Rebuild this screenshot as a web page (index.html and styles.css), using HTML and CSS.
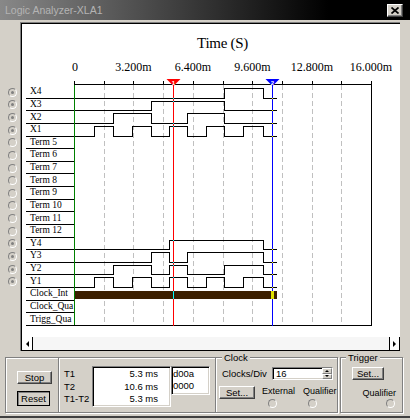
FILE: index.html
```html
<!DOCTYPE html>
<html>
<head>
<meta charset="utf-8">
<link rel="stylesheet" href="styles.css">
</head>
<body>
<div class="window">
  <div class="titlebar">
    <span class="title">Logic Analyzer-XLA1</span>
    <span class="close"><svg width="8" height="7" viewBox="0 0 8 7"><path d="M0.5 0.5L7.5 6.5M7.5 0.5L0.5 6.5" stroke="#000" stroke-width="1.7" fill="none"/></svg></span>
  </div>

  <div class="main">
    <div class="radios">
      <div class="rrow"><span class="radio on"></span></div>
      <div class="rrow"><span class="radio on"></span></div>
      <div class="rrow"><span class="radio on"></span></div>
      <div class="rrow"><span class="radio on"></span></div>
      <div class="rrow"><span class="radio"></span></div>
      <div class="rrow"><span class="radio"></span></div>
      <div class="rrow"><span class="radio"></span></div>
      <div class="rrow"><span class="radio"></span></div>
      <div class="rrow"><span class="radio"></span></div>
      <div class="rrow"><span class="radio"></span></div>
      <div class="rrow"><span class="radio"></span></div>
      <div class="rrow"><span class="radio"></span></div>
      <div class="rrow"><span class="radio on"></span></div>
      <div class="rrow"><span class="radio on"></span></div>
      <div class="rrow"><span class="radio on"></span></div>
      <div class="rrow"><span class="radio on"></span></div>
    </div>

    <div class="scope">
      <div class="scope-in">
        <div class="heading">Time (S)</div>
        <div class="chart">
          <div class="labels">
            <div class="lrow">X4</div>
            <div class="lrow">X3</div>
            <div class="lrow">X2</div>
            <div class="lrow">X1</div>
            <div class="lrow">Term 5</div>
            <div class="lrow">Term 6</div>
            <div class="lrow">Term 7</div>
            <div class="lrow">Term 8</div>
            <div class="lrow">Term 9</div>
            <div class="lrow">Term 10</div>
            <div class="lrow">Term 11</div>
            <div class="lrow">Term 12</div>
            <div class="lrow">Y4</div>
            <div class="lrow">Y3</div>
            <div class="lrow">Y2</div>
            <div class="lrow">Y1</div>
            <div class="lrow">Clock_Int</div>
            <div class="lrow">Clock_Qua</div>
            <div class="lrow">Trigg_Qua</div>
          </div>
          <svg class="plot" width="326" height="279" viewBox="74 58 326 279">
            <g class="axis-labels">
              <text x="75" y="71">0</text>
              <text x="133.5" y="71">3.200m</text>
              <text x="193" y="71">6.400m</text>
              <text x="252.5" y="71">9.600m</text>
              <text x="312" y="71">12.800m</text>
              <text x="371" y="71">16.000m</text>
            </g>
            <g shape-rendering="crispEdges" fill="none">
              <path stroke="#c0c0c0" stroke-dasharray="5 3" d="M104.5 85V325M133.5 85V325M163.5 85V325M193.5 85V325M223.5 85V325M252.5 85V325M282.5 85V325M312.5 85V325M341.5 85V325"/>
              <path stroke="#000" d="M74.5 81V84M104.5 81V84M133.5 81V84M163.5 81V84M193.5 81V84M223.5 81V84M252.5 81V84M282.5 81V84M312.5 81V84M341.5 81V84"/>
              <path stroke="#000" d="M74 84.5H372M371.5 81V326M74 325.5H372"/>
              <g stroke="#000">
                <path d="M74 98.5H224.5V88.5H263.5V98.5H277"/>
                <path d="M74 110.5H151.5V101.5H224.5V110.5H277"/>
                <path d="M74 123.5H113.5V113.5H151.5V123.5H187.5V113.5H224.5V123.5H277"/>
                <path d="M74 136.5H94.5V126.5H113.5V136.5H132.5V126.5H151.5V136.5H169.5V126.5H187.5V136.5H206.5V126.5H224.5V136.5H243.5V126.5H263.5V136.5H277"/>
                <path d="M74 249.5H169.5V240.5H263.5V249.5H277"/>
                <path d="M74 262.5H151.5V252.5H169.5V262.5H187.5V252.5H263.5V262.5H277"/>
                <path d="M74 274.5H113.5V265.5H151.5V274.5H169.5V265.5H187.5V274.5H224.5V265.5H263.5V274.5H277"/>
                <path d="M74 287.5H94.5V277.5H113.5V287.5H132.5V277.5H151.5V287.5H169.5V277.5H187.5V287.5H206.5V277.5H224.5V287.5H243.5V277.5H263.5V287.5H277"/>
              </g>
              <rect x="75" y="291" width="202" height="8" fill="#3c1f00"/>
              <path stroke="#008000" d="M74.5 85V325"/>
              <path stroke="#ff0000" d="M173.5 84V326"/>
              <path stroke="#0000ff" d="M272.5 84V326"/>
              <rect x="173" y="291" width="1" height="8" fill="#00ffff"/>
              <rect x="271" y="291" width="3" height="8" fill="#e0e000"/>
              <path fill="#00ffff" d="M173 98h1v1h-1zM173 101h1v1h-1zM173 123h1v1h-1zM173 126h1v1h-1zM173 240h1v1h-1zM173 262h1v1h-1zM173 265h1v1h-1zM173 277h1v1h-1z"/>
              <path fill="#ffff00" d="M272 98h1v1h-1zM272 110h1v1h-1zM272 123h1v1h-1zM272 136h1v1h-1zM272 249h1v1h-1zM272 262h1v1h-1zM272 274h1v1h-1zM272 287h1v1h-1z"/>
            </g>
            <polygon points="166.5,79 180.5,79 173.5,86" fill="#ff0000"/>
            <text class="mk" x="173.5" y="84.5">1</text>
            <polygon points="265.5,79 279.5,79 272.5,86" fill="#0000ff"/>
            <text class="mk" x="272.5" y="84.5">2</text>
          </svg>
        </div>
        <div class="hscroll">
          <div class="sb-btn sb-left"><span class="arrow-l"></span></div>
          <div class="sb-track"></div>
          <div class="sb-btn sb-right"><span class="arrow-r"></span></div>
        </div>
      </div>
    </div>
  </div>

  <div class="controls">
    <div class="etch run">
      <div class="btn stop">Stop</div>
      <div class="btn reset">Reset</div>
    </div>
    <div class="etch tvals">
      <div class="tlabels">
        <div>T1</div>
        <div>T2</div>
        <div>T1-T2</div>
      </div>
      <div class="sunken tbox">
        <div>5.3 ms</div>
        <div>10.6 ms</div>
        <div>5.3 ms</div>
      </div>
      <div class="sunken hbox">
        <div>d00a</div>
        <div>0000</div>
      </div>
    </div>
    <div class="etch clock">
      <div class="legend">Clock</div>
      <div class="cdrow">
        <span class="cdlabel">Clocks/Div</span>
        <div class="sunken spin-input">
          <span>16</span>
          <span class="spin"><i class="up"></i><i class="down"></i></span>
        </div>
      </div>
      <div class="cdrow2">
        <div class="btn cset">Set...</div>
        <div class="opt ext">
          <div>External</div>
          <span class="radio"></span>
        </div>
        <div class="opt qual">
          <div>Qualifier</div>
          <span class="radio"></span>
        </div>
      </div>
    </div>
    <div class="etch trigger">
      <div class="legend">Trigger</div>
      <div class="btn tset">Set...</div>
      <div class="tqual">Qualifier</div>
      <span class="radio tradio"></span>
    </div>
  </div>
</div>
</body>
</html>
```

FILE: styles.css
```css
html, body {
  margin: 0;
  background: #d4d0c8;
}
body {
  width: 410px;
  height: 420px;
  overflow: hidden;
  font-family: "Liberation Sans", Arial, sans-serif;
  font-size: 9.5px;
  color: #000;
}
.window {
  height: 416px;
  border-bottom: 2px solid #404040;
}

/* title bar */
.titlebar {
  height: 20px;
  display: flex;
  align-items: center;
  justify-content: space-between;
  padding: 0 7px 0 5px;
  background: linear-gradient(to right, #888888 0%, #000000 80%);
}
.title {
  color: #b4b4b4;
  font-size: 10.5px;
}
.close {
  width: 16px;
  height: 13px;
  box-sizing: border-box;
  background: #d4d0c8;
  border: 1px solid;
  border-color: #fff #404040 #404040 #fff;
  box-shadow: inset -1px -1px 0 #808080;
  display: flex;
  align-items: center;
  justify-content: center;
}
.close svg { display: block; }

/* main area */
.main {
  display: grid;
  grid-template-columns: 20px 380px;
  padding-top: 2px;
  height: 331px;
  box-sizing: border-box;
}
.radios {
  padding: 64px 0 0 8px;
}
.rrow {
  height: 12.6316px;
  display: flex;
  align-items: center;
}
.radio {
  width: 9px;
  height: 9px;
  box-sizing: border-box;
  border-radius: 50%;
  border: 1px solid;
  border-color: #808080 #fff #fff #808080;
  display: flex;
  align-items: center;
  justify-content: center;
}
.radio.on::after {
  content: "";
  width: 3px;
  height: 3px;
  border-radius: 50%;
  background: #808080;
}

.scope {
  border-top: 1px solid #808080;
  border-left: 1px solid #808080;
}
.scope-in {
  border-top: 1px solid #000;
  border-left: 1px solid #000;
  background: #fff;
}
.heading {
  margin-left: 52px;
  width: 297px;
  padding: 9px 0 5px;
  line-height: 20px;
  text-align: center;
  font-family: "Liberation Serif", "Times New Roman", serif;
  font-size: 15px;
  letter-spacing: -0.3px;
}
.chart {
  display: grid;
  grid-template-columns: 52px 326px;
  height: 279px;
}
.labels {
  padding: 28px 0 0 4px;
  font-family: "Liberation Serif", "Times New Roman", serif;
  font-size: 9.5px;
}
.lrow {
  height: 12.6316px;
  box-sizing: border-box;
  border-bottom: 1px solid #000;
  padding-left: 4px;
  line-height: 11px;
  white-space: nowrap;
  overflow: hidden;
  display: flex;
  align-items: center;
}
.plot {
  display: block;
  overflow: visible;
}
.axis-labels {
  font-family: "Liberation Serif", "Times New Roman", serif;
  font-size: 12px;
  text-anchor: middle;
  fill: #000;
}
.mk {
  font-family: "Liberation Sans", Arial, sans-serif;
  font-size: 6px;
  font-weight: bold;
  text-anchor: middle;
  fill: #fff;
}

/* horizontal scrollbar */
.hscroll {
  display: flex;
  height: 13px;
  border-bottom: 1px solid #000;
  background: #f6f6f6;
}
.sb-btn {
  width: 11px;
  box-sizing: border-box;
  background: #fff;
  display: flex;
  align-items: center;
  justify-content: center;
}
.sb-left { border-right: 1px solid #000; }
.sb-right {
  border-left: 1px solid #000;
  border-right: 1px solid #000;
}
.sb-track { flex: 1; }
.arrow-l {
  border-right: 3px solid #000;
  border-top: 3px solid transparent;
  border-bottom: 3px solid transparent;
}
.arrow-r {
  border-left: 3px solid #000;
  border-top: 3px solid transparent;
  border-bottom: 3px solid transparent;
}

/* bottom controls */
.controls {
  display: flex;
  margin: 6px 0 0 5px;
  height: 56px;
}
.etch {
  box-sizing: border-box;
  height: 56px;
  border: 1px solid #808080;
  box-shadow: inset 1px 1px 0 #fff, 1px 1px 0 #fff;
}
.run { width: 54px; }
.tvals {
  width: 156px;
  border-left: none;
  border-right: none;
  display: flex;
  align-items: flex-start;
}
.clock { width: 123px; }
.trigger {
  width: 63px;
  margin-left: 2px;
}

.btn {
  box-sizing: border-box;
  background: #d4d0c8;
  border: 1px solid;
  border-color: #fff #404040 #404040 #fff;
  box-shadow: inset -1px -1px 0 #808080;
  display: flex;
  align-items: center;
  justify-content: center;
  line-height: 1;
}
.stop {
  margin: 13px 0 0 11px;
  width: 35px;
  height: 13px;
}
.reset {
  margin: 7px 0 0 11px;
  width: 33px;
  height: 15px;
  border-color: #000;
  box-shadow: inset 1px 1px 0 #808080;
}

.sunken {
  box-sizing: border-box;
  border: 1px solid;
  border-color: #808080 #fff #fff #808080;
  box-shadow: inset 1px 1px 0 #000, inset -1px -1px 0 #d4d0c8;
  background: #fff;
}
.tlabels {
  box-sizing: border-box;
  width: 33px;
  padding: 10px 0 0 5px;
  line-height: 12.5px;
}
.tbox {
  margin-top: 8px;
  width: 79px;
  height: 41px;
  padding: 1px 12px 0 0;
  text-align: right;
  line-height: 12.5px;
}
.hbox {
  margin-top: 8px;
  width: 39px;
  height: 29px;
  padding: 1px 0 0 1px;
  line-height: 12px;
}

.legend {
  width: fit-content;
  margin: -6px 0 0 6px;
  padding: 0 2px;
  background: #d4d0c8;
  line-height: 11px;
}
.trigger .legend { margin-left: 5px; }
.cdrow {
  display: flex;
  align-items: center;
  margin-top: 4px;
  padding-left: 6px;
}
.cdlabel { width: 50px; }
.spin-input {
  width: 61px;
  height: 13px;
  display: flex;
  align-items: center;
  padding-left: 3px;
}
.spin {
  margin-left: auto;
  width: 10px;
  height: 11px;
  display: flex;
  flex-direction: column;
}
.spin i {
  flex: 1;
  box-sizing: border-box;
  background: #d4d0c8;
  border: 1px solid;
  border-color: #fff #808080 #808080 #fff;
  display: flex;
  align-items: center;
  justify-content: center;
}
.spin .up::after {
  content: "";
  border-bottom: 2px solid #000;
  border-left: 2px solid transparent;
  border-right: 2px solid transparent;
}
.spin .down::after {
  content: "";
  border-top: 2px solid #000;
  border-left: 2px solid transparent;
  border-right: 2px solid transparent;
}
.cdrow2 {
  display: flex;
  margin-top: 6px;
  padding-left: 3px;
}
.cset {
  width: 36px;
  height: 13px;
}
.opt {
  font-size: 9px;
  line-height: 11px;
}
.opt .radio { margin-top: 2px; }
.ext {
  margin-left: 7px;
  width: 41px;
}
.ext .radio { margin-left: 6px; }
.qual { width: 33px; }
.qual .radio { margin-left: 5px; }

.tset {
  margin: 4px 0 0 11px;
  width: 32px;
  height: 13px;
}
.tqual {
  margin-top: 8px;
  padding-right: 6px;
  text-align: right;
  font-size: 9px;
  line-height: 11px;
}
.tradio { margin-left: 45px; }
```
